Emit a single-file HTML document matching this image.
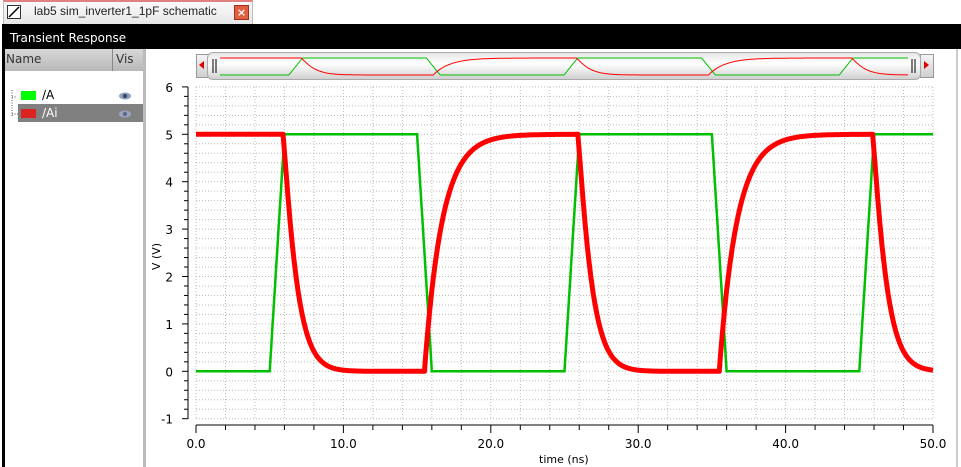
<!DOCTYPE html>
<html><head><meta charset="utf-8"><style>
body{margin:0;width:961px;height:467px;background:#fff;font-family:"DejaVu Sans","Liberation Sans",sans-serif;overflow:hidden;position:relative}
.abs{position:absolute}
</style></head><body>
<div class="abs" style="left:0;top:0;width:961px;height:26px;background:#fff"></div>
<div class="abs" style="left:3px;top:0;width:248px;height:23px;background:linear-gradient(#fafafa,#e6e6e6);border:1px solid #bbb;border-top:2px solid #e08080"></div>
<div class="abs" style="left:7px;top:5px;width:12px;height:12px;border:1px solid #333;background:#fff"></div>
<svg class="abs" style="left:7px;top:5px" width="14" height="14"><line x1="2" y1="12" x2="12" y2="2" stroke="#000" stroke-width="1.5"/></svg>
<div class="abs" style="left:34px;top:4px;font-size:12px;color:#222;font-family:'Liberation Sans',sans-serif">lab5 sim_inverter1_1pF schematic</div>
<div class="abs" style="left:234px;top:5px;width:13px;height:13px;background:#e06040;border:1px solid #a03020;color:#fff;font-size:11px;line-height:13px;text-align:center;font-weight:bold">×</div>
<div class="abs" style="left:2px;top:24px;width:959px;height:443px;background:#000"></div>
<div class="abs" style="left:10px;top:31px;color:#fff;font-size:12px">Transient Response</div>
<div class="abs" style="left:5px;top:49px;width:956px;height:418px;background:#fff"></div>
<div class="abs" style="left:5px;top:49px;width:138px;height:22px;background:linear-gradient(#d8d8d8,#b8b8b8)"></div>
<div class="abs" style="left:112px;top:49px;width:1px;height:22px;background:#888"></div>
<div class="abs" style="left:6px;top:52px;font-size:12px;color:#333">Name</div>
<div class="abs" style="left:116px;top:52px;font-size:12px;color:#333">Vis</div>
<div class="abs" style="left:143px;top:49px;width:3px;height:418px;background:#bbb"></div>
<div class="abs" style="left:18px;top:104px;width:125px;height:18px;background:#808080"></div>
<svg class="abs" style="left:10px;top:88px" width="12" height="30"><path d="M2 2V28M2 9H6M2 26H8" stroke="#555" stroke-dasharray="1 1.5" fill="none"/></svg>
<div class="abs" style="left:21px;top:91px;width:15px;height:9px;background:#00ff00"></div>
<div class="abs" style="left:21px;top:109px;width:15px;height:9px;background:#dd2222"></div>
<div class="abs" style="left:42px;top:88px;font-size:12px;color:#000">/A</div>
<div class="abs" style="left:42px;top:106px;font-size:12px;color:#fff">/Ai</div>
<svg class="abs" style="left:118px;top:89px" width="16" height="30"><ellipse cx="7" cy="7" rx="6" ry="3.5" fill="#8fa0c0"/><circle cx="7" cy="7" r="2.2" fill="#3a4a6a"/><ellipse cx="7" cy="25" rx="6" ry="3.5" fill="#9aa5bb"/><circle cx="7" cy="25" r="2.2" fill="#5a6a88"/></svg>
<div class="abs" style="left:956px;top:49px;width:2px;height:418px;background:#ccc"></div>
<div class="abs" style="left:196px;top:54px;width:12px;height:22px;background:linear-gradient(#f4f4f4,#cfcfcf);border:1px solid #999"></div>
<div class="abs" style="left:920px;top:54px;width:12px;height:22px;background:linear-gradient(#f4f4f4,#cfcfcf);border:1px solid #999"></div>
<div class="abs" style="left:207px;top:52px;width:712px;height:26px;border-radius:6px;background:linear-gradient(#e6e6e6,#fff 40%,#d0d0d0);border:1px solid #aaa"></div>
<svg class="abs" style="left:0;top:0" width="961" height="467" id="s"></svg>
<div class="abs" style="left:539px;top:453px;font-size:11px;color:#000">time (ns)</div>
<div class="abs" style="left:143px;top:250px;font-size:11px;transform:rotate(-90deg);transform-origin:center">V (V)</div>
<script>
var s=document.getElementById('s'),h='';
function X(t){return 196+t*14.74}function Y(v){return 371.3-v*47.4}
for(var t=0;t<=50;t+=2){var x=X(t);h+='<line x1="'+x+'" y1="87" x2="'+x+'" y2="419" stroke="#bbb" stroke-dasharray="1 2"/>';h+='<line x1="'+x+'" y1="425" x2="'+x+'" y2="'+(t%10==0?433:430)+'" stroke="#000"/>';}
for(var i=-5;i<=30;i++){var y=Y(i*0.2);h+='<line x1="196" y1="'+y+'" x2="933" y2="'+y+'" stroke="#bbb" stroke-dasharray="1 2"/>';h+='<line x1="'+(i%5==0?182:184)+'" y1="'+y+'" x2="188" y2="'+y+'" stroke="#000"/>';}
h+='<line x1="188" y1="87" x2="188" y2="419" stroke="#000"/><line x1="196" y1="425" x2="933" y2="425" stroke="#000"/>';
for(var v=-1;v<=6;v++)h+='<text x="173" y="'+(Y(v)+5)+'" font-size="12" text-anchor="end" font-family="DejaVu Sans">'+v+'</text>';
for(var t=0;t<=50;t+=10)h+='<text x="'+X(t)+'" y="448" font-size="12" text-anchor="middle" font-family="DejaVu Sans">'+t.toFixed(1)+'</text>';
function A(t){var p=((t%20)+20)%20;if(p<5)return 0;if(p<6)return 5*(p-5);if(p<15)return 5;if(p<16)return 5*(16-p);return 0;}
var FS=5.9,RS=15.5-5.9;
function Af(t){if(t<FS)return 5;var base=Math.floor((t-FS)/20)*20+FS;var q=t-base;
 if(q<RS)return 5*Math.exp(-Math.pow(q,1.15)/0.95);var r=q-RS;var v0=5*Math.exp(-Math.pow(RS,1.15)/0.95);return 5-(5-v0)*Math.exp(-r/1.2);}
function path(f,xf,yf,t0,t1){var d='';for(var t=t0;t<=t1+1e-9;t+=0.05){d+=(d?'L':'M')+xf(t).toFixed(1)+' '+yf(f(t)).toFixed(1);}return d;}
h+='<path d="'+path(A,X,Y,0,50)+'" stroke="#00c000" stroke-width="2.5" fill="none"/>';
h+='<path d="'+path(Af,X,Y,0,50)+'" stroke="#ff0000" stroke-width="5" fill="none" stroke-linejoin="round"/>';
function mx(t){return 220+t*13.76}function my(v){return 75-v*3.4}
h+='<path d="'+path(A,mx,my,0,50)+'" stroke="#00c000" stroke-width="1" fill="none"/>';
h+='<path d="'+path(Af,mx,my,0,50)+'" stroke="#ff0000" stroke-width="1" fill="none"/>';
h+='<path d="M213 59V73M216 59V73M912 59V73M915 59V73" stroke="#000"/>';
h+='<path d="M204 61L199 65L204 69Z M924 61L929 65L924 69Z" fill="#d00"/>';
s.innerHTML=h;
</script>
</body></html>
